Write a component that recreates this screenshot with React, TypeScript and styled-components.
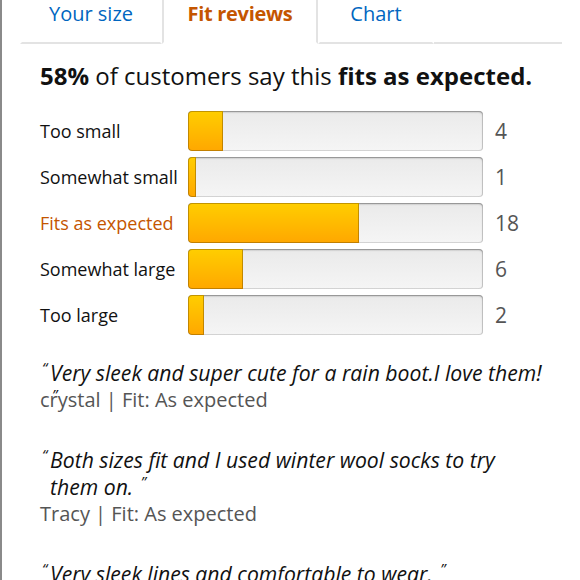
import React from "react";
import styled, { createGlobalStyle } from "styled-components";

const GlobalStyle = createGlobalStyle`
  html, body {
    margin: 0;
    padding: 0;
    background: #fff;
  }
  body {
    font-family: "Open Sans", "Noto Sans", Arial, sans-serif;
    color: #111;
  }
`;

const tabs = [
  { label: "Your size", width: 142 },
  { label: "Fit reviews", width: 156, active: true },
  { label: "Chart", width: 116 },
];

const sizes = [
  { label: "Too small", count: 4, pct: 12 },
  { label: "Somewhat small", count: 1, pct: 2.7 },
  { label: "Fits as expected", count: 18, pct: 58, active: true },
  { label: "Somewhat large", count: 6, pct: 18.6 },
  { label: "Too large", count: 2, pct: 5.4 },
];

const reviews = [
  { text: "Very sleek and super cute for a rain boot.I love them!", author: "crystal" },
  { text: "Both sizes fit and I used winter wool socks to try them on.", author: "Tracy" },
  { text: "Very sleek lines and comfortable to wear.", author: "Kim" },
];

const App = () => {
  return (
    <Page>
      <GlobalStyle />
      <Panel>
        <Tabs>
          {tabs.map((t) => (
            <Tab key={t.label} active={t.active} wide={t.width}>
              {t.label}
            </Tab>
          ))}
          <TabFiller />
        </Tabs>
        <Content>
          <Summary>
            <b>58%</b> of customers say this <b>fits as expected.</b>
          </Summary>
          <Meters>
            {sizes.map((s) => (
              <MeterRow key={s.label}>
                <Label active={s.active}>{s.label}</Label>
                <Meter>
                  <Fill style={{ width: `${s.pct}%` }} />
                </Meter>
                <Count>{s.count}</Count>
              </MeterRow>
            ))}
          </Meters>
          <Reviews>
            {reviews.map((r) => (
              <Review key={r.author}>
                <ReviewText>
                  <OpenMark>“</OpenMark>
                  <Words>{r.text}</Words> <CloseMark>”</CloseMark>
                </ReviewText>
                <Author>{r.author} | Fit: As expected</Author>
              </Review>
            ))}
          </Reviews>
        </Content>
      </Panel>
    </Page>
  );
};

export default App;

const Page = styled.div`
  width: 580px;
  height: 580px;
  overflow: hidden;
  border-left: 2px solid #8a8a8a;
  box-sizing: border-box;
`;
const Panel = styled.div`
  padding: 0 18px;
`;
const Tabs = styled.div`
  display: flex;
  height: 44px;
`;
const Tab = styled.div<{ active?: boolean; wide: number }>`
  width: ${(props) => props.wide}px;
  box-sizing: border-box;
  text-align: center;
  font-size: 20px;
  line-height: 28px;
  color: ${(props) => (props.active ? "#c45500" : "#0066c0")};
  font-weight: ${(props) => (props.active ? 700 : 400)};
  letter-spacing: ${(props) => (props.active ? "-0.3px" : "0")};
  border-left: 2px solid ${(props) => (props.active ? "#e3e3e3" : "transparent")};
  border-right: 2px solid ${(props) => (props.active ? "#e3e3e3" : "transparent")};
  border-bottom: 2px solid ${(props) => (props.active ? "transparent" : "#e3e3e3")};
`;
const TabFiller = styled.div`
  flex: 1;
  border-bottom: 2px solid #e3e3e3;
`;
const Content = styled.div`
  padding: 0 20px;
`;
const Summary = styled.div`
  font-size: 24px;
  line-height: 30px;
  margin-top: 17px;
  b {
    font-weight: 700;
  }
`;
const Meters = styled.div`
  margin-top: 20px;
  display: flex;
  flex-direction: column;
  gap: 6px;
`;
const MeterRow = styled.div`
  display: flex;
  align-items: center;
  height: 40px;
`;
const Label = styled.div<{ active?: boolean }>`
  width: 148px;
  font-size: 18px;
  color: ${(props) => (props.active ? "#c45500" : "#111")};
`;
const Meter = styled.div`
  width: 295px;
  height: 40px;
  box-sizing: border-box;
  border-radius: 4px;
  background: linear-gradient(to bottom, #eaeaea, #f5f5f5);
  box-shadow: inset 0 1px 2px rgba(0, 0, 0, 0.35), inset 0 0 0 1px rgba(0, 0, 0, 0.12);
  overflow: hidden;
`;
const Fill = styled.div`
  height: 100%;
  box-sizing: border-box;
  border-radius: 4px 0 0 4px;
  background: linear-gradient(to bottom, #ffce00, #ffa700);
  box-shadow: inset 0 0 0 1px rgba(120, 80, 0, 0.45);
`;
const Count = styled.div`
  margin-left: 12px;
  font-size: 21px;
  color: #555;
`;
const Reviews = styled.div`
  margin-top: 24px;
  margin-right: -6px;
  display: flex;
  flex-direction: column;
  gap: 33px;
`;
const Review = styled.div``;
const ReviewText = styled.div`
  font-size: 21.2px;
  font-style: italic;
  line-height: 0;
  padding-left: 10px;
`;
const Words = styled.span`
  line-height: 27px;
`;
const OpenMark = styled.span`
  display: inline-block;
  width: 10px;
  font-size: 15px;
  line-height: 0;
  vertical-align: top;
  position: relative;
  top: 8px;
  left: 2px;
  margin-left: -10px;
`;
const CloseMark = styled.span`
  font-size: 15px;
  line-height: 0;
  vertical-align: top;
  position: relative;
  top: 8px;
  left: 2px;
`;
const Author = styled.div`
  font-size: 20px;
  line-height: 27px;
  color: #555;
`;
